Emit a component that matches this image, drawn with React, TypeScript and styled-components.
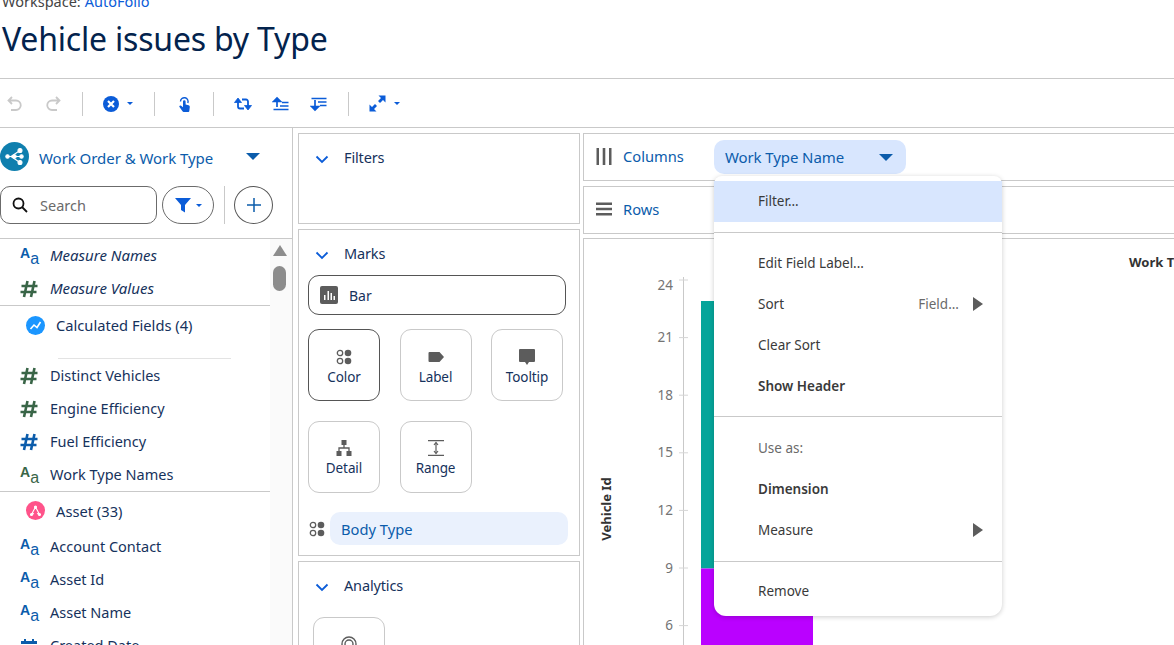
import React from "react";
import styled, { createGlobalStyle } from "styled-components";

const GlobalStyle = createGlobalStyle`
  html, body {
    margin: 0;
    height: 100%;
    overflow: hidden;
    background: #fff;
    font-family: "Noto Sans", "Open Sans", sans-serif;
  }
  * { box-sizing: border-box; }
`;

const LINE = "#c9c9c9";
const NAVY = "#16325c";
const BLUE = "#0b5cab";
const BRIGHT = "#0b5cd8";
const GREY = "#5c5c5c";

const Page = styled.div`
  width: 100vw;
  height: 100vh;
  overflow: hidden;
  display: flex;
  flex-direction: column;
`;

const Header = styled.header`
  height: 79px;
  flex: none;
  border-bottom: 1px solid ${LINE};
`;

const WorkspaceLine = styled.div`
  height: 10px;
  overflow: hidden;
  display: flex;
  align-items: flex-end;
  padding-left: 2px;
  font-size: 14.5px;
  line-height: 18px;
  color: #444;
  a { color: ${BRIGHT}; margin-left: 4px; }
`;

const Title = styled.h1`
  margin: 8px 0 0 2px;
  font-size: 32px;
  line-height: 42px;
  font-weight: 400;
  color: #03234d;
  letter-spacing: -0.2px;
`;

const Toolbar = styled.div`
  height: 49px;
  flex: none;
  display: flex;
  align-items: center;
  gap: 20px;
  padding: 1px 0 0 6px;
  border-bottom: 1px solid ${LINE};
`;

const ToolSep = styled.span`
  width: 1px;
  height: 24px;
  background: ${LINE};
`;

const ToolGroup = styled.span<{ $w: number }>`
  display: flex;
  align-items: center;
  gap: 8px;
  width: ${(p) => p.$w}px;
  svg { flex: none; }
`;

const Caret = styled.span<{ $size?: number; $color?: string }>`
  display: inline-block;
  flex: none;
  width: 0;
  height: 0;
  border-left: ${(p) => p.$size ?? 4}px solid transparent;
  border-right: ${(p) => p.$size ?? 4}px solid transparent;
  border-top: ${(p) => (p.$size ?? 4) * 1.05}px solid ${(p) => p.$color ?? BLUE};
`;

const Body = styled.div`
  flex: 1;
  min-height: 0;
  display: flex;
`;

const LeftPanel = styled.aside`
  width: 293px;
  flex: none;
  border-right: 1px solid ${LINE};
  display: flex;
  flex-direction: column;
`;

const DatasetRow = styled.div`
  display: flex;
  align-items: center;
  padding: 14px 0 0 0;
  height: 43px;
  color: ${BLUE};
  font-size: 15px;
  letter-spacing: -0.05px;
  span.name { margin: 2px 0 0 10px; width: 207px; }
`;

const DatasetBadge = styled.span`
  width: 29px;
  height: 29px;
  border-radius: 50%;
  background: #0f7fae;
  display: flex;
  align-items: center;
  justify-content: center;
  flex: none;
`;

const SearchRow = styled.div`
  display: flex;
  align-items: center;
  height: 38px;
  margin: 15px 0 14px;
`;

const SearchBox = styled.div`
  width: 157px;
  height: 38px;
  border: 1px solid #6b6b6b;
  border-radius: 10px;
  display: flex;
  align-items: center;
  gap: 11px;
  padding-left: 10px;
  color: #6a6a6a;
  font-size: 14.5px;
`;

const FilterPill = styled.div`
  width: 52px;
  height: 38px;
  margin-left: 5px;
  border: 1px solid #6b6b6b;
  border-radius: 19px;
  display: flex;
  align-items: center;
  justify-content: center;
  gap: 5px;
`;

const SearchSep = styled.span`
  width: 1px;
  height: 38px;
  margin: 0 9px 0 10px;
  background: ${LINE};
`;

const PlusButton = styled.div`
  width: 39px;
  height: 38px;
  border: 1px solid #555;
  border-radius: 50%;
  display: flex;
  align-items: center;
  justify-content: center;
`;

const FieldArea = styled.div`
  flex: 1;
  min-height: 0;
  display: flex;
  border-top: 1px solid ${LINE};
  overflow: hidden;
`;

const FieldList = styled.div`
  width: 270px;
  flex: none;
`;

const FieldGroup = styled.div<{ $line?: boolean }>`
  border-bottom: ${(p) => (p.$line ? `1px solid ${LINE}` : "none")};
`;

const FieldRow = styled.div<{ $italic?: boolean }>`
  height: 33px;
  display: flex;
  align-items: center;
  gap: 12px;
  padding: 0 0 2px 20px;
  color: ${NAVY};
  font-size: ${(p) => (p.$italic ? 15 : 14.5)}px;
  font-style: ${(p) => (p.$italic ? "italic" : "normal")};
  > :first-child { margin-top: 2px; }
`;

const GroupHeader = styled.div<{ $h: number }>`
  height: ${(p) => p.$h}px;
  display: flex;
  align-items: center;
  gap: 11px;
  padding: 0 0 1px 26px;
  color: ${NAVY};
  font-size: 14.7px;
`;

const GroupBadge = styled.span<{ $bg: string }>`
  width: 19px;
  height: 19px;
  border-radius: 50%;
  background: ${(p) => p.$bg};
  display: flex;
  align-items: center;
  justify-content: center;
  flex: none;
`;

const ShortRule = styled.div`
  width: 173px;
  height: 1px;
  margin: 13px 0 0 58px;
  background: #e3e3e3;
`;

const TypeIcon = styled.span<{ $color: string }>`
  width: 18px;
  height: 18px;
  flex: none;
  display: flex;
  justify-content: space-between;
  color: ${(p) => p.$color};
  font-style: normal;
  font-family: "Liberation Sans", sans-serif;
`;

const BigA = styled.span`
  font-size: 14px;
  line-height: 13px;
  font-weight: 700;
  align-self: flex-start;
`;

const SmallA = styled.span`
  font-size: 16px;
  line-height: 13px;
  align-self: flex-end;
`;

const HashSvg = styled.svg`
  flex: none;
  width: 18px;
  height: 18px;
  fill: none;
  stroke-width: 2.6;
`;

const ScrollTrack = styled.div`
  flex: 1;
  background: #fafafa;
  display: flex;
  flex-direction: column;
  align-items: center;
  padding: 6px 3px 0 0;
`;

const ScrollArrow = styled.span`
  width: 0;
  height: 0;
  border-left: 7.5px solid transparent;
  border-right: 7.5px solid transparent;
  border-bottom: 11px solid #8d8d8d;
`;

const ScrollThumb = styled.span`
  width: 13px;
  height: 25px;
  margin-top: 10px;
  border-radius: 7px;
  background: #8d8d8d;
`;

const MiddleColumn = styled.section`
  width: 282px;
  flex: none;
  margin-left: 5px;
  padding-top: 5px;
  display: flex;
  flex-direction: column;
  gap: 5px;
`;

const ShelfBox = styled.div<{ $h: number }>`
  border: 1px solid ${LINE};
  height: ${(p) => p.$h}px;
  flex: none;
  overflow: hidden;
`;

const SectionHead = styled.div`
  display: flex;
  align-items: center;
  gap: 15px;
  padding: 13px 0 12px 16px;
  font-size: 14.5px;
  line-height: 20px;
  letter-spacing: -0.15px;
  color: ${NAVY};
  svg { margin-top: 3px; }
`;

const MarkSelect = styled.div`
  width: 258px;
  height: 40px;
  margin-left: 9px;
  border: 1px solid #555;
  border-radius: 11px;
  display: flex;
  align-items: center;
  gap: 11px;
  padding-left: 11px;
  font-size: 14px;
  color: ${NAVY};
`;

const TileGrid = styled.div`
  display: grid;
  grid-template-columns: repeat(3, 72px);
  grid-auto-rows: 72px;
  column-gap: 19.5px;
  row-gap: 20px;
  margin: 14px 0 0 9px;
  > :nth-child(-n + 3) { padding-top: 19px; }
`;

const Tile = styled.div<{ $active?: boolean }>`
  border: 1px solid ${(p) => (p.$active ? "#555" : LINE)};
  border-radius: 11px;
  display: flex;
  flex-direction: column;
  align-items: center;
  padding-top: 18px;
  gap: 3px;
  font-size: 13.5px;
  line-height: 18px;
  letter-spacing: -0.1px;
  color: ${NAVY};
  svg { flex: none; width: 16px; height: 16px; }
`;

const AnalyticsTile = styled(Tile)`
  width: 72px;
  height: 72px;
  margin: 10px 0 0 14px;
`;

const EncodingRow = styled.div`
  display: flex;
  align-items: center;
  gap: 5px;
  margin: 19px 0 0 10px;
`;

const EncodingPill = styled.div`
  width: 238px;
  height: 33px;
  border-radius: 10px;
  background: #eaf1fd;
  color: ${BLUE};
  display: flex;
  align-items: center;
  padding-left: 11px;
  font-size: 14.7px;
`;

const RightColumn = styled.section`
  width: 600px;
  flex: none;
  margin-left: 3px;
  position: relative;
  padding-top: 5px;
  display: flex;
  flex-direction: column;
  gap: 5px;
`;

const ShelfRow = styled.div`
  height: 48px;
  flex: none;
  border: 1px solid ${LINE};
  display: flex;
  align-items: center;
  color: ${BLUE};
  font-size: 14.7px;
`;

const ShelfLabel = styled.span`
  width: 130px;
  display: flex;
  align-items: center;
  gap: 11px;
  padding: 0 0 2px 12px;
  flex: none;
  svg { flex: none; }
`;

const FieldPill = styled.div`
  width: 192px;
  height: 34px;
  border-radius: 10px;
  background: #d8e6fe;
  display: flex;
  align-items: center;
  justify-content: space-between;
  padding: 0 13px 0 11px;
  font-size: 15px;
  letter-spacing: -0.1px;
`;

const ChartFrame = styled.div`
  height: 500px;
  flex: none;
  border: 1px solid ${LINE};
  margin-top: -1px;
  overflow: hidden;
`;

const Menu = styled.div`
  position: absolute;
  left: 131px;
  top: 48px;
  width: 288px;
  height: 440px;
  padding-top: 5px;
  background: #fff;
  border-radius: 8px 8px 12px 12px;
  box-shadow: 0 1px 5px rgba(0, 0, 0, 0.2);
`;

const MenuItem = styled.div<{ $active?: boolean; $bold?: boolean; $muted?: boolean }>`
  height: 41px;
  display: flex;
  align-items: center;
  justify-content: space-between;
  padding: 0 19px 2px 44px;
  background: ${(p) => (p.$active ? "#d8e6fe" : "transparent")};
  color: ${(p) => (p.$muted ? "#6a6a6a" : "#3a3a3a")};
  font-size: 13.5px;
  font-weight: ${(p) => (p.$bold ? 600 : 400)};
`;

const MenuRule = styled.div<{ $before: number; $after: number }>`
  height: 1px;
  background: ${LINE};
  margin: ${(p) => p.$before}px 0 ${(p) => p.$after}px;
`;

const MenuAside = styled.span`
  display: flex;
  align-items: center;
  gap: 14px;
  color: #6a6a6a;
`;

const SubArrow = styled.span`
  width: 0;
  height: 0;
  border-top: 7px solid transparent;
  border-bottom: 7px solid transparent;
  border-left: 10px solid #5c5c5c;
`;

const AaIcon = ({ color }: { color: string }) => (
  <TypeIcon $color={color}>
    <BigA>A</BigA>
    <SmallA>a</SmallA>
  </TypeIcon>
);

const HashIcon = ({ color }: { color: string }) => (
  <HashSvg viewBox="0 0 18 18" stroke={color}>
    <path d="M7.500 1 4 17M14.500 1 11 17M1.500 6h16M.5 12h16" />
  </HashSvg>
);

const Chevron = () => (
  <svg width="14" height="14" viewBox="0 0 14 14" fill="none" stroke={BRIGHT} strokeWidth="1.8">
    <path d="M1.5 4.5 7 10l5.5-5.5" />
  </svg>
);

const ColorDots = ({ size = 16 }: { size?: number }) => (
  <svg width={size} height={size} viewBox="0 0 16 16">
    <circle cx="4" cy="4" r="2.7" fill="none" stroke={GREY} strokeWidth="1.3" />
    <circle cx="12" cy="4" r="3.3" fill={GREY} />
    <circle cx="4" cy="12" r="2.7" fill="none" stroke={GREY} strokeWidth="1.3" />
    <circle cx="12" cy="12" r="3.3" fill={GREY} />
  </svg>
);

const yTicks = [24, 21, 18, 15, 12, 9, 6];

const Chart = () => (
  <svg width="598" height="410" viewBox="0 0 598 410">
    <text x="545" y="28" fontSize="13" fontWeight="700" fill="#333" fontFamily="Noto Sans">
      Work Type Name
    </text>
    <text
      x="0"
      y="0"
      fontSize="13"
      fontWeight="700"
      fill="#333"
      fontFamily="Noto Sans"
      textAnchor="middle"
      transform="translate(27 270) rotate(-90)"
    >
      Vehicle Id
    </text>
    <line x1="99.5" y1="38" x2="99.5" y2="410" stroke={LINE} />
    {yTicks.map((t, i) => (
      <g key={t}>
        <line x1="95" y1={41 + i * 57.6} x2="104" y2={41 + i * 57.6} stroke="#d6d6d6" />
        <text x="89" y={(i === 0 ? 51 : 45.500) + i * 57.6} fontSize="13.5" fill="#747474" textAnchor="end" fontFamily="Noto Sans">
          {t}
        </text>
      </g>
    ))}
    <rect x="117" y="62" width="112" height="267.500" fill="#06a59a" />
    <rect x="117" y="329.500" width="112" height="81" fill="#ba01ff" />
  </svg>
);

const App: React.FC = () => {
  return (
    <Page>
      <GlobalStyle />
      <Header>
        <WorkspaceLine>
          Workspace:<a>AutoFolio</a>
        </WorkspaceLine>
        <Title>Vehicle issues by Type</Title>
      </Header>

      <Toolbar>
        <svg width="18" height="18" viewBox="0 0 18 18" fill="none" stroke="#c9c9c9" strokeWidth="1.8">
          <path d="M6 2 2.5 5.5 6 9M3 5.5h7a4.7 4.7 0 0 1 0 9.5H5" />
        </svg>
        <svg width="18" height="18" viewBox="0 0 18 18" fill="none" stroke="#c9c9c9" strokeWidth="1.8">
          <path d="M12 2l3.5 3.5L12 9M15 5.500H8a4.700 4.700 0 0 0 0 9.500h5" />
        </svg>
        <ToolSep />
        <ToolGroup $w={31}>
          <svg width="16" height="16" viewBox="0 0 16 16">
            <circle cx="8" cy="8" r="8" fill={BRIGHT} />
            <path d="M5 5l6 6M11 5l-6 6" stroke="#fff" strokeWidth="2.2" />
          </svg>
          <Caret $color={BRIGHT} $size={3.5} />
        </ToolGroup>
        <ToolSep />
        <svg width="18" height="18" viewBox="0 0 18 18" fill={BRIGHT}>
          <path d="M8 6.500a1.300 1.300 0 0 1 2.600 0v3l3 .8c.8.2 1.300.9 1.200 1.700l-.5 4a1 1 0 0 1-1 1H8.500a1 1 0 0 1-.8-.4L4.500 12c-.7-1 .6-2.200 1.600-1.300L8 12.200Z" />
          <path d="M5.500 6.500a3.800 3.800 0 1 1 7.300 1.500" fill="none" stroke={BRIGHT} strokeWidth="1.400" />
        </svg>
        <ToolSep />
        <svg width="18" height="18" viewBox="0 0 18 18" fill="none" stroke={BRIGHT} strokeWidth="1.800">
          <path d="M4 5v6.500a2 2 0 0 0 2 2h4M14 13V6.500a2 2 0 0 0-2-2H8" />
          <path d="M0.500 7.500 4 3l3.500 4.500ZM10.500 10.500 14 15l3.500-4.500Z" fill={BRIGHT} strokeWidth="0.8" />
        </svg>
        <svg width="18" height="18" viewBox="0 0 18 18" fill="none" stroke={BRIGHT} strokeWidth="1.700">
          <path d="M1.500 6.500 5 3l3.500 3.500H1.500Z" fill={BRIGHT} />
          <path d="M5 6v6M1.500 14.500h15M8 11h8.500M10 7.500h6.500" />
        </svg>
        <svg width="18" height="18" viewBox="0 0 18 18" fill="none" stroke={BRIGHT} strokeWidth="1.700">
          <path d="M1.500 11.500 5 15l3.500-3.500H1.500Z" fill={BRIGHT} />
          <path d="M5 5v7M1.500 3.500h15M8 7h8.500M10 10.500h6.500" />
        </svg>
        <ToolSep />
        <ToolGroup $w={32}>
          <svg width="17" height="17" viewBox="0 0 17 17" fill={BRIGHT}>
            <path d="M9.500 .5h7v7l-2.500-2.500-3 3-2-2 3-3ZM7.500 16.500h-7v-7l2.500 2.500 3-3 2 2-3 3Z" />
          </svg>
          <Caret $color={BRIGHT} $size={3.5} />
        </ToolGroup>
      </Toolbar>

      <Body>
        <LeftPanel>
          <DatasetRow>
            <DatasetBadge>
              <svg width="21" height="21" viewBox="0 0 21 21" fill="#fff" stroke="#fff" strokeWidth="1.100">
                <circle cx="3.500" cy="10.500" r="1.700" />
                <circle cx="10.500" cy="10.500" r="1.700" />
                <circle cx="16" cy="4.500" r="2" />
                <circle cx="17.500" cy="10.500" r="1.700" />
                <circle cx="16" cy="16.500" r="2" />
                <path d="M3.500 10.500h14M7 10.500 16 4.500M7 10.500l9 6" fill="none" />
              </svg>
            </DatasetBadge>
            <span className="name">Work Order &amp; Work Type</span>
            <Caret $size={7} $color={BLUE} />
          </DatasetRow>

          <SearchRow>
            <SearchBox>
              <svg width="18" height="18" viewBox="0 0 18 18" fill="none" stroke="#111" strokeWidth="1.800">
                <circle cx="7.500" cy="7.500" r="5" />
                <path d="M11 11l5 5" />
              </svg>
              Search
            </SearchBox>
            <FilterPill>
              <svg width="16" height="16" viewBox="0 0 16 16" fill={BRIGHT}>
                <path d="M0 1h16L10 8v7.500L6 13V8Z" />
              </svg>
              <Caret $color={BRIGHT} $size={3.5} />
            </FilterPill>
            <SearchSep />
            <PlusButton>
              <svg width="16" height="16" viewBox="0 0 16 16" stroke={BLUE} strokeWidth="1.500">
                <path d="M8 1v14M1 8h14" />
              </svg>
            </PlusButton>
          </SearchRow>

          <FieldArea>
            <FieldList>
              <FieldGroup $line>
                <FieldRow $italic>
                  <AaIcon color={BLUE} />
                  Measure Names
                </FieldRow>
                <FieldRow $italic>
                  <HashIcon color="#396547" />
                  Measure Values
                </FieldRow>
              </FieldGroup>
              <FieldGroup $line>
                <GroupHeader $h={39}>
                  <GroupBadge $bg="#1b96ff">
                    <svg width="13" height="13" viewBox="0 0 13 13" fill="none" stroke="#fff" strokeWidth="1.600">
                      <path d="M1.500 10 5 6l3 2.500L11.500 3" />
                    </svg>
                  </GroupBadge>
                  Calculated Fields (4)
                </GroupHeader>
                <ShortRule />
                <FieldRow>
                  <HashIcon color="#396547" />
                  Distinct Vehicles
                </FieldRow>
                <FieldRow>
                  <HashIcon color="#396547" />
                  Engine Efficiency
                </FieldRow>
                <FieldRow>
                  <HashIcon color={BLUE} />
                  Fuel Efficiency
                </FieldRow>
                <FieldRow>
                  <AaIcon color="#396547" />
                  Work Type Names
                </FieldRow>
              </FieldGroup>
              <FieldGroup>
                <GroupHeader $h={38}>
                  <GroupBadge $bg="#ff538a">
                    <svg width="13" height="13" viewBox="0 0 13 13" fill="#fff" stroke="#fff" strokeWidth="1.100">
                      <path d="M6.500 3 2.500 10.500M6.500 3l4 7.500M2.500 10.500 5 9.500M10.500 10.500 8 9.500" fill="none" />
                      <circle cx="6.500" cy="3" r="1" />
                      <circle cx="2.500" cy="10.500" r="1" />
                      <circle cx="10.500" cy="10.500" r="1" />
                    </svg>
                  </GroupBadge>
                  Asset (33)
                </GroupHeader>
                <FieldRow>
                  <AaIcon color={BLUE} />
                  Account Contact
                </FieldRow>
                <FieldRow>
                  <AaIcon color={BLUE} />
                  Asset Id
                </FieldRow>
                <FieldRow>
                  <AaIcon color={BLUE} />
                  Asset Name
                </FieldRow>
                <FieldRow>
                  <svg width="18" height="18" viewBox="0 0 18 18" fill={BLUE}>
                    <path d="M1 4h16v3H1ZM1 8.500h16V17H1ZM4 2h2v3H4ZM12 2h2v3h-2Z" />
                  </svg>
                  Created Date
                </FieldRow>
              </FieldGroup>
            </FieldList>
            <ScrollTrack>
              <ScrollArrow />
              <ScrollThumb />
            </ScrollTrack>
          </FieldArea>
        </LeftPanel>

        <MiddleColumn>
          <ShelfBox $h={91}>
            <SectionHead>
              <Chevron />
              Filters
            </SectionHead>
          </ShelfBox>
          <ShelfBox $h={327}>
            <SectionHead>
              <Chevron />
              Marks
            </SectionHead>
            <MarkSelect>
              <svg width="18" height="18" viewBox="0 0 18 18">
                <rect width="18" height="18" rx="2" fill={GREY} />
                <path d="M4 14V9h1.500v5ZM7.500 14V5H9v9ZM10.500 14V7H12v7ZM13.500 14v-4H15v4Z" fill="#fff" />
              </svg>
              Bar
            </MarkSelect>
            <TileGrid>
              <Tile $active>
                <ColorDots />
                Color
              </Tile>
              <Tile>
                <svg viewBox="0 0 16 16" fill={GREY}>
                  <path d="M1.500 3h10L16 8l-4.500 5h-10a1 1 0 0 1-1-1V4a1 1 0 0 1 1-1Z" />
                </svg>
                Label
              </Tile>
              <Tile>
                <svg viewBox="0 0 16 16" fill={GREY}>
                  <path d="M1 0h14a1 1 0 0 1 1 1v11a1 1 0 0 1-1 1h-5l-2 3-2-3H1a1 1 0 0 1-1-1V1a1 1 0 0 1 1-1Z" />
                </svg>
                Tooltip
              </Tile>
              <Tile>
                <svg viewBox="0 0 16 16" fill={GREY}>
                  <path d="M5.500 0h5v5h-5ZM.5 11h5v5h-5ZM10.500 11h5v5h-5Z" />
                  <path d="M8 5v3M3 11V8h10v3" fill="none" stroke={GREY} strokeWidth="1.300" />
                </svg>
                Detail
              </Tile>
              <Tile>
                <svg viewBox="0 0 16 16" fill="none" stroke={GREY} strokeWidth="1.200">
                  <path d="M0 .6h16M0 15.400h16M8 3v10" />
                  <path d="M6 5l2-2.500L10 5M6 11l2 2.500 2-2.500" />
                </svg>
                Range
              </Tile>
            </TileGrid>
            <EncodingRow>
              <ColorDots />
              <EncodingPill>Body Type</EncodingPill>
            </EncodingRow>
          </ShelfBox>
          <ShelfBox $h={200}>
            <SectionHead>
              <Chevron />
              Analytics
            </SectionHead>
            <AnalyticsTile>
              <svg viewBox="0 0 16 16" fill="none" stroke={GREY} strokeWidth="1.400">
                <circle cx="8" cy="8" r="7" />
                <circle cx="8" cy="8" r="4" />
              </svg>
            </AnalyticsTile>
          </ShelfBox>
        </MiddleColumn>

        <RightColumn>
          <ShelfRow>
            <ShelfLabel>
              <svg width="16" height="17" viewBox="0 0 16 17" fill={GREY}>
                <path d="M.5 0H3v17H.5ZM6.700 0h2.600v17H6.700ZM13 0h2.500v17H13Z" />
              </svg>
              Columns
            </ShelfLabel>
            <FieldPill>
              Work Type Name
              <Caret $size={7} $color={BLUE} />
            </FieldPill>
          </ShelfRow>
          <ShelfRow>
            <ShelfLabel>
              <svg width="16" height="16" viewBox="0 0 16 16" fill={GREY}>
                <path d="M0 1.500h16V4H0ZM0 6.800h16v2.400H0ZM0 12h16v2.500H0Z" />
              </svg>
              Rows
            </ShelfLabel>
          </ShelfRow>
          <ChartFrame>
            <Chart />
          </ChartFrame>

          <Menu>
            <MenuItem $active>Filter...</MenuItem>
            <MenuRule $before={10} $after={10} />
            <MenuItem>Edit Field Label...</MenuItem>
            <MenuItem>
              Sort
              <MenuAside>
                Field...
                <SubArrow />
              </MenuAside>
            </MenuItem>
            <MenuItem>Clear Sort</MenuItem>
            <MenuItem $bold>Show Header</MenuItem>
            <MenuRule $before={9} $after={11} />
            <MenuItem $muted>Use as:</MenuItem>
            <MenuItem $bold>Dimension</MenuItem>
            <MenuItem>
              Measure
              <SubArrow />
            </MenuItem>
            <MenuRule $before={10} $after={9} />
            <MenuItem>Remove</MenuItem>
          </Menu>
        </RightColumn>
      </Body>
    </Page>
  );
};

export default App;
